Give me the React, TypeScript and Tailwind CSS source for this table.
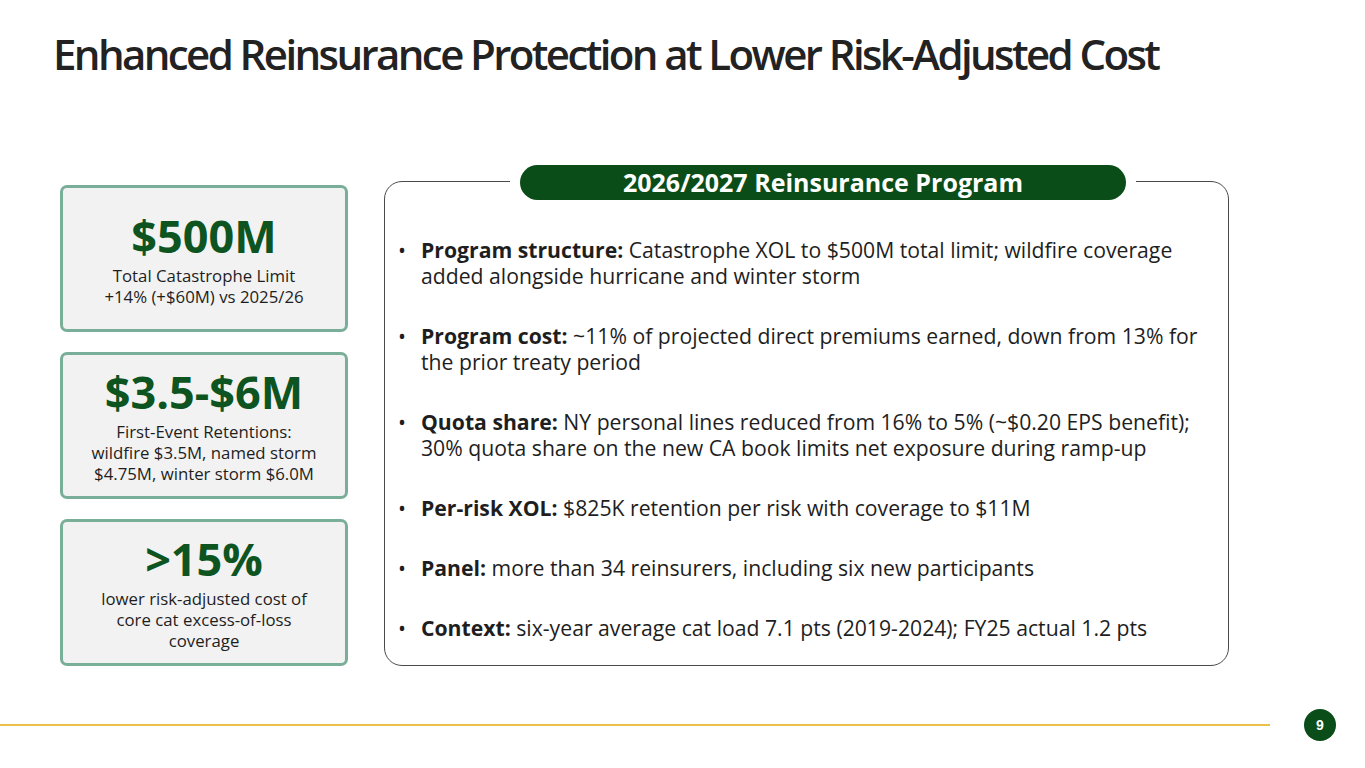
const font={fontFamily:'"Open Sans", "Noto Sans", sans-serif'};

interface StatCardProps
{
	value:string,
	lines:string[]
}

function StatCard({value,lines}:StatCardProps)
{
	return (
		<div className="flex h-[147px] w-[288px] flex-col items-center justify-center rounded-[7px] border-[3px] border-[#79ae99] bg-[#f2f2f2] text-center">
			<div className="text-[45px] font-bold leading-[50px] text-[#0d5421]">{value}</div>
			<div className="mt-[4px] text-[16.8px] leading-[21px] text-[#1e1e1e]">
				{lines.map((l)=><div key={l}>{l}</div>)}
			</div>
		</div>
	);
}

const bullets=[
	{label:'Program structure:',text:'Catastrophe XOL to $500M total limit; wildfire coverage added alongside hurricane and winter storm'},
	{label:'Program cost:',text:'~11% of projected direct premiums earned, down from 13% for the prior treaty period'},
	{label:'Quota share:',text:'NY personal lines reduced from 16% to 5% (~$0.20 EPS benefit); 30% quota share on the new CA book limits net exposure during ramp-up'},
	{label:'Per-risk XOL:',text:'$825K retention per risk with coverage to $11M'},
	{label:'Panel:',text:'more than 34 reinsurers, including six new participants'},
	{label:'Context:',text:'six-year average cat load 7.1 pts (2019-2024); FY25 actual 1.2 pts'},
];

export default function App()
{
	return (
		<div className="flex h-[768px] w-[1365px] flex-col overflow-hidden bg-white" style={font}>
			<h1 className="pl-[53px] pt-[26px] text-[42px] font-semibold leading-[56px] tracking-[-2.6px] text-[#222222]">
				Enhanced Reinsurance Protection at Lower Risk-Adjusted Cost
			</h1>

			<div className="mt-[99px] flex items-start pl-[60px]">
				<div className="mt-[4px] flex flex-col gap-[20px]">
					<StatCard value="$500M" lines={['Total Catastrophe Limit','+14% (+$60M) vs 2025/26']}/>
					<StatCard value="$3.5-$6M" lines={['First-Event Retentions:','wildfire $3.5M, named storm','$4.75M, winter storm $6.0M']}/>
					<StatCard value=">15%" lines={['lower risk-adjusted cost of','core cat excess-of-loss','coverage']}/>
				</div>

				<div className="relative ml-[36px] h-[485px] w-[845px] rounded-[18px] border border-[#4a4a4a] pl-[13px] pr-[20px] pt-[55px]">
					<div className="absolute left-[125px] top-[-17px] bg-white px-[10px]">
						<div className="flex h-[35px] w-[606px] items-center justify-center rounded-full bg-[#0b4d19] text-[25px] font-bold text-white">
							2026/2027 Reinsurance Program
						</div>
					</div>
					<ul className="flex flex-col gap-[34px] text-[21.2px] leading-[26px] text-[#1e1e1e]">
						{bullets.map((b)=>(
							<li key={b.label} className="flex">
								<span className="w-[23px] shrink-0">•</span>
								<span><b className="font-bold">{b.label}</b> {b.text}</span>
							</li>
						))}
					</ul>
				</div>
			</div>

			<div className="mt-auto mb-[27px] flex items-center">
				<div className="h-[2px] w-[1270px] bg-[#ecc14a]"/>
				<div className="ml-[34px] flex h-[32px] w-[32px] items-center justify-center rounded-full bg-[#0b4d19] text-[14px] font-bold text-white" style={{fontFamily:'"Liberation Sans", Arial, sans-serif'}}>
					9
				</div>
			</div>
		</div>
	);
}
